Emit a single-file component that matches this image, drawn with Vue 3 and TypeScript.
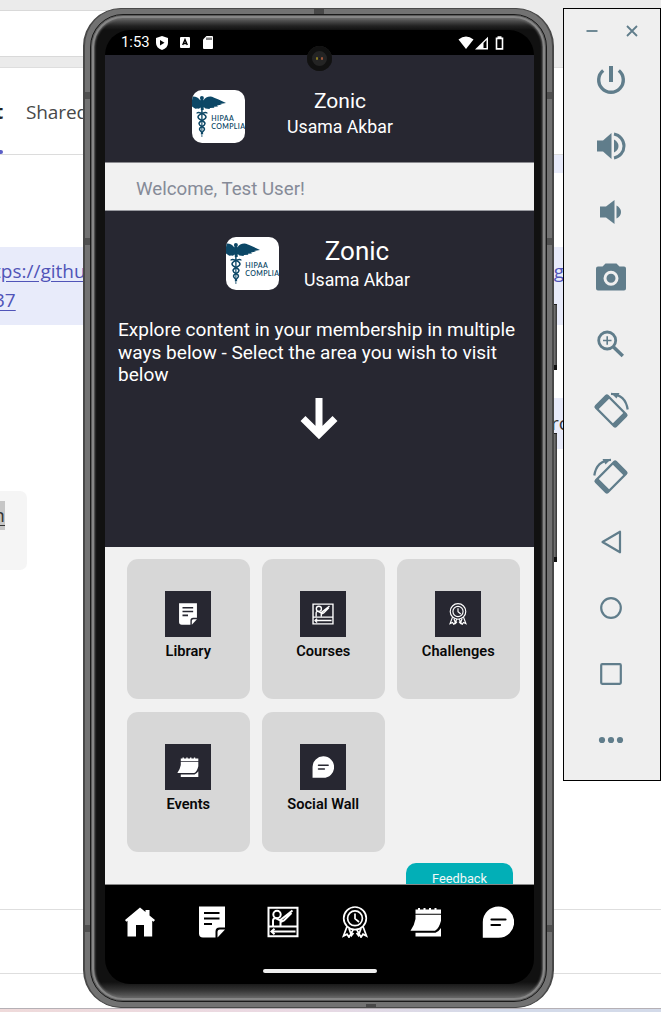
<script setup lang="ts">
type IconName = 'library' | 'courses' | 'challenges' | 'events' | 'social'

const tiles: { label: string; icon: IconName }[] = [
  { label: 'Library', icon: 'library' },
  { label: 'Courses', icon: 'courses' },
  { label: 'Challenges', icon: 'challenges' },
  { label: 'Events', icon: 'events' },
  { label: 'Social Wall', icon: 'social' },
]

const navItems: string[] = ['home', 'library', 'courses', 'challenges', 'events', 'social']

const tools: string[] = [
  'power', 'volume-up', 'volume-down', 'camera', 'zoom',
  'rotate-left', 'rotate-right', 'back', 'home', 'overview', 'more',
]
</script>

<template>
  <div class="desktop">
    <!-- Shared symbols -->
    <svg class="defs" width="0" height="0" aria-hidden="true">
      <symbol id="i-home" viewBox="0 0 32 32">
        <path fill="#fff" d="M16 1.500 21.500 6V4h4v5.500L31 14l-1.400 1.700-1.400-1V30.500H20V19h-8v11.500H3.500V14.700l-1.200 1L1 14z" />
      </symbol>
      <symbol id="i-library" viewBox="0 0 32 32">
        <path fill="#fff" d="M3 .5h26v21h-5.500q-4 0-4 4V31.500H7q-4 0-4-4z" />
        <path fill="#fff" d="M29 23.500 21.500 31.500V26q0-2.500 2.500-2.500z" />
        <path stroke="var(--hole)" stroke-width="2.200" d="M8 7h15.500M8 12.500h15.500M8 18h8" />
      </symbol>
      <symbol id="i-courses" viewBox="0 0 32 32">
        <g fill="none" stroke="#fff" stroke-width="2">
          <path d="M1.500 1.700h29v28.600h-29zM1.500 20.500h29" />
          <circle cx="10" cy="8.500" r="3.700" />
          <path d="M6 20V14.500q0-2.500 3-2.200l4 2L25.500 4.500M24.500 7 17 14.500 13.500 16v4M28.500 25.500H4.500" />
          <path d="M7.500 22.800 4.500 25.500l3 2.700" />
        </g>
      </symbol>
      <symbol id="i-challenges" viewBox="0 0 32 32">
        <g fill="none" stroke="#fff" stroke-width="1.700">
          <circle cx="16" cy="12.300" r="11.300" />
          <circle cx="16" cy="12.300" r="7.400" />
          <path d="M16 7.500v5.200l4 3.300M8 20.500 4.500 30l3.500-1.800 2 3 4.500-8M24 20.500 27.500 30 24 28.200l-2 3-4.500-8M10 22.500l2.500 7 2-2.500M22 22.500l-2.500 7-2-2.500" />
        </g>
      </symbol>
      <symbol id="i-events" viewBox="0 0 32 32">
        <path fill="#fff" d="M5.500 3.500H8V2h2v1.500h3.500V2h2v1.500h3.500V2h2v1.500h3.500V2h2v1.500H31v4.300H5.500zM5.500 8.800H31v6q-2 8-6 10H.5Q4.500 19 5.500 13zM5.500 26.800h20q3-1 5.500-4.800v8.500H5.500z" />
      </symbol>
      <symbol id="i-social" viewBox="0 0 32 32">
        <path fill="#fff" d="M16.500 .5A15.500 15.500 0 1 1 16.500 31.800H.8V16A15.600 15.600 0 0 1 16.500 .5z" />
        <path stroke="var(--hole)" stroke-width="2.200" stroke-linecap="round" d="M9.500 13.500h14M9.500 19h8.500" />
      </symbol>
      <symbol id="i-hipaa" viewBox="0 0 53 53">
        <g fill="#0c4766">
          <path d="M0 6.500q5.500-.5 8.300 4v-1h3v1Q14 6 20 6.700q5 2 14 6.300l-6 1 2 .6-5 .9 1 .9-4 .4.300.9-4.300.2-.5 1.200-4-.5-1.800-1.500V20H8.800v-2.500l-2 1.300-1.500-.3-2 .3L0 16.500z" />
          <circle cx="9.900" cy="8" r="2" />
          <path d="M9 9h1.800l-.5 38h-.8z" />
        </g>
        <g fill="none" stroke="#0c4766" stroke-width="1.500">
          <path d="M5 23.500c0-3 9 1 9 3.500 0 3-7 3.500-7 6.500s5.500 3 5.500 5.500-3.500 3-3 5" />
          <path d="M15 23.500c0-3-9 1-9 3.500 0 3 7 3.500 7 6.500s-5.500 3-5.500 5.500 3.500 3 3 5" />
        </g>
        <text class="logo-text" x="19.300" y="30.800" textLength="22.500">HIPAA</text>
        <text class="logo-text" x="19.300" y="39" textLength="39.500">COMPLIAN</text>
      </symbol>
    </svg>

    <!-- Chat window behind the emulator -->
    <div class="chat">
      <div class="titlebar"><div class="search"></div></div>
      <div class="tabs">
        <span class="tab-cut">t</span><span class="tab">Shared</span>
        <i class="tab-marker"></i>
      </div>
      <div class="messages">
        <div class="strip strip-a"></div>
        <div class="message">
          <div class="link-row"><a>tps://githu</a><a class="tail">g</a></div>
          <a>37</a>
        </div>
        <div class="strip strip-b">rc</div>
        <div class="bubble"><span>n</span></div>
      </div>
      <div class="composer"></div>
      <div class="below"></div>
      <div class="taskbar"></div>
    </div>

    <!-- Phone -->
    <div class="key key-top"></div>
    <div class="key key-bottom"></div>
    <div class="phone">
      <i class="seam seam-top"></i><i class="seam seam-bottom"></i>
      <i class="band band-1"></i><i class="band band-2"></i><i class="band band-3"></i>
      <i class="band right band-1"></i><i class="band right band-2"></i><i class="band right band-3"></i>
      <div class="rim">
        <div class="screen">
          <div class="status">
            <span class="clock">1:53</span>
            <svg class="shield" width="12" height="14" viewBox="0 0 12 14"><path fill="#fff" d="M6 0 12 2v5q0 5-6 7-6-2-6-7V2z" /><path d="M4 4v5.500L8.500 6.700z" /></svg>
            <svg class="letter" width="10" height="11" viewBox="0 0 10 11"><rect width="10" height="11" rx="1" fill="#fff" /><path fill="none" stroke="#000" stroke-width="1.400" d="M2.700 8 5 2.500 7.300 8M3.500 6.500h3" /></svg>
            <svg class="sd" width="10" height="13" viewBox="0 0 10 13"><path fill="#fff" d="M3.500 0H9q1 0 1 1v11q0 1-1 1H1q-1 0-1-1V3.500z" /><path stroke="#000" d="M4 1.500v2.500M6 1.500v2.500M8 1.500v2.500" /></svg>
            <svg class="signals" width="47" height="14" viewBox="0 0 47 14">
              <path fill="#fff" d="M.5 3.500Q8-2.500 15.500 3.500L8 13z" />
              <path fill="#fff" d="M17 13.500 30 .8v12.700z" />
              <path fill="#000" d="M25.500 7 28.500 4v8h-3z" />
              <path fill="#fff" d="M39.500 .3h4V1.500h1.800v12.200h-7.600V1.500h1.800z" /><path fill="#000" d="M39.300 3.200h4.400v8.900h-4.400z" />
            </svg>
          </div>
          <header class="appbar">
            <svg class="logo" width="53" height="53"><use href="#i-hipaa" /></svg>
            <div class="brand"><b>Zonic</b><span>Usama Akbar</span></div>
          </header>
          <div class="welcome">Welcome, Test User!</div>
          <section class="hero">
            <div class="hero-brand">
              <svg class="logo" width="53" height="53"><use href="#i-hipaa" /></svg>
              <div class="brand big"><b>Zonic</b><span>Usama Akbar</span></div>
            </div>
            <p>Explore content in your membership in multiple<br />ways below - Select the area you wish to visit<br />below</p>
            <svg class="arrow" width="38" height="42" viewBox="0 0 38 42"><path fill="none" stroke="#fff" stroke-width="7" d="M19 0v36M3 20.500 19 36.300 35 20.500" /></svg>
          </section>
          <main class="content">
            <div class="grid">
              <div v-for="t in tiles" :key="t.label" class="tile">
                <div class="tile-icon"><svg width="22" height="22"><use :href="'#i-' + t.icon" /></svg></div>
                <span>{{ t.label }}</span>
              </div>
            </div>
            <button class="feedback">Feedback</button>
          </main>
          <nav class="nav">
            <div class="nav-row">
              <svg v-for="n in navItems" :key="n" width="32" height="32"><use :href="'#i-' + n" /></svg>
            </div>
            <i class="handle"></i>
          </nav>
        </div>
        <div class="lens"><i></i><i></i></div>
      </div>
    </div>

    <!-- Emulator toolbar -->
    <aside class="toolbar">
      <div class="window-buttons">
        <svg width="12" height="12" viewBox="0 0 12 12"><path d="M.5 6h11" /></svg>
        <svg width="12" height="12" viewBox="0 0 12 12"><path d="M1 1l10 10M11 1 1 11" /></svg>
      </div>
      <div v-for="(tool, i) in tools" :key="i" class="tool">
        <svg width="36" height="36" viewBox="-18 -18 36 36">
          <g v-if="tool === 'power'" class="line" stroke-width="3.400"><path d="M0-14V2" stroke-width="4" /><path d="M-7.800-9.500A12.300 12.300 0 1 0 7.800-9.500" /></g>
          <g v-else-if="tool === 'volume-up'"><path d="M-14-5.500h6L.5-13V13L-8 5.500h-6zM3-6.500Q7.500-4 7.500 0T3 6.500z" /><path class="line" stroke-width="3" d="M3-12A12.200 12.200 0 0 1 3 12" /></g>
          <path v-else-if="tool === 'volume-down'" d="M-11-5.500h6L3.500-12V12L-5 5.500h-6zM5.500-6.500Q10-4 10 0T5.500 6.500z" />
          <g v-else-if="tool === 'camera'" transform="translate(0 -1)"><path d="M-5.500-13.500h11l3 3H13q2 0 2 2v20q0 2-2 2h-26q-2 0-2-2v-20q0-2 2-2h4.500z" /><circle cy="1.300" r="6" fill="none" stroke="#efefef" stroke-width="3" /></g>
          <g v-else-if="tool === 'zoom'" class="line" stroke-width="2.800"><circle cx="-3.800" cy="-3.500" r="8.500" /><path d="M2.500 3l9.300 9" stroke-width="3.500" /><path d="M-8-3.500H.5M-3.800-7.700V.7" stroke-width="1.600" /></g>
          <g v-else-if="tool.startsWith('rotate')" :class="{ mirror: tool === 'rotate-right' }">
            <path transform="translate(0 1) rotate(45)" fill-rule="evenodd" d="M-13-9.500h26q2.300 0 2.300 2.300V7.200q0 2.300-2.300 2.300h-26q-2.300 0-2.300-2.300V-7.200q0-2.300 2.300-2.300zM-10-7.300V7.300h20V-7.300z" />
            <path class="line" stroke-width="2.200" d="M0-16.200Q14.500-15.500 16.700-.5" /><path d="M0-17h8.500L5.500-11.500z" />
          </g>
          <path v-else-if="tool === 'back'" class="line" stroke-width="2.200" stroke-linejoin="round" d="M9-10.300V10.300L-8.500 0z" />
          <circle v-else-if="tool === 'home'" class="line" stroke-width="2.200" r="9.800" />
          <rect v-else-if="tool === 'overview'" class="line" stroke-width="2.200" x="-9.800" y="-9.800" width="19.600" height="19.600" rx="1" />
          <g v-else><circle cx="-9" r="3.100" /><circle r="3.100" /><circle cx="9" r="3.100" /></g>
        </svg>
      </div>
    </aside>
  </div>
</template>

<style>
html, body { margin: 0; overflow: hidden; }
</style>

<style scoped>
* { box-sizing: border-box; }
svg { display: block; }
.desktop { position: relative; width: 661px; height: 1012px; overflow: hidden; background: #fff; }
.defs { position: absolute; }
.logo-text { font: 600 7px Lato, sans-serif; fill: #0c4766; }

.chat { display: flex; flex-direction: column; height: 1012px; font-family: "Open Sans", "Noto Sans", sans-serif; }
.titlebar { height: 68px; background: #ebebeb; padding-top: 10px; border-bottom: 1px solid #dedede; }
.search { width: 400px; height: 47px; background: #fff; border: 1px solid #d9d9d9; border-left: 0; }
.tabs { position: relative; height: 87px; border-bottom: 1px solid #dcdcdc; display: flex; padding-top: 30px; font-size: 19px; line-height: 28px; color: #484848; white-space: nowrap; }
.tab-cut { width: 26px; margin-left: -5px; padding-right: 4px; font-weight: 700; color: #222; }
.tab { margin-left: 5px; letter-spacing: -.1px; }
.tab-marker { position: absolute; left: -4px; bottom: 0; width: 7px; height: 4px; border-radius: 2px; background: #5b5fc7; }
.messages { height: 754px; }
.strip { margin-left: 540px; background: #e8ebfa; }
.strip-a { height: 18px; }
.message { margin-top: 74px; height: 78px; background: #e8ebfa; padding-top: 10px; font-size: 19px; line-height: 29px; color: #5054b8; }
.message a { display: block; text-decoration: underline; text-underline-offset: 3px; margin-left: -6px; white-space: nowrap; }
.link-row { display: flex; justify-content: space-between; padding-right: 97px; }
.strip-b { margin-top: 73px; height: 51px; padding-left: 11px; line-height: 50px; font-size: 19px; color: #333; }
.bubble { margin-top: 42px; width: 27px; height: 79px; border-radius: 0 7px 7px 0; background: #f5f5f5; padding-top: 10px; font-size: 19px; line-height: 29px; color: #333; }
.bubble span { display: block; width: 5px; height: 29px; background: #c6c6c6; text-decoration: underline; text-underline-offset: 3px; direction: rtl; overflow: hidden; }
.composer { height: 65px; border: 1px solid #dedede; border-width: 1px 0; }
.below { flex: 1; }
.taskbar { height: 4px; border-top: 1px solid #b5b0b5; background: linear-gradient(90deg, #efdada, #ead9e3 45%, #d3dae9 75%); }

.key { position: absolute; left: 550px; width: 7px; background: linear-gradient(90deg, #222 40%, #777 60%, #333); border-bottom: 5px solid #111; border-top: 1px solid #222; }
.key-top { top: 304px; height: 66px; }
.key-bottom { top: 433px; height: 129px; }

.phone { position: absolute; left: 83px; top: 8px; width: 471px; height: 1000px; border-radius: 38px; border: 1px solid #484848; border-width: 1px 2px; background: #727272; padding: 5px; }
.seam { position: absolute; width: 10px; height: 5px; background: #484848; }
.seam-top { left: 229px; top: 0; }
.seam-bottom { left: 281px; bottom: 0; height: 3px; }
.band { position: absolute; left: 0; width: 5px; height: 7px; background: #505050; }
.band.right { left: auto; right: 0; }
.band-1 { top: 83px; }
.band-2 { top: 229px; }
.band-3 { top: 916px; }
.rim { position: relative; height: 988px; border-radius: 33px; border: 1px solid #1a1a1a; background: linear-gradient(180deg, #8a8a8a 0, #555 5px, #222 11px, #111 15px, #111 calc(100% - 19px), #333 calc(100% - 11px), #777 100%); padding: 15px 14px 17px; box-shadow: inset 0 0 0 1px #5a5a5a, inset 0 0 0 3px #868686, inset 0 0 2px 4px #666; }
.screen { position: relative; height: 954px; width: 429px; border-radius: 25px; overflow: hidden; background: #000; display: flex; flex-direction: column; font-family: Roboto, sans-serif; color: #fff; --hole: #272731; }

.status { height: 25px; display: flex; align-items: center; padding-left: 16px; }
.clock { width: 28px; font-size: 14.800px; line-height: 16px; margin-top: -1px; }
.shield { margin-left: 7px; }
.letter { margin-left: 12px; }
.sd { margin-left: 13px; }
.signals { margin-left: auto; margin-right: 29px; }

.appbar { height: 108px; background: #272731; border-bottom: 1px solid #8b8b90; display: flex; align-items: flex-start; padding: 36px 0 0 87px; }
.appbar .logo { margin-top: -1px; }
.logo { background: #fff; border-radius: 10px; flex: none; }
.brand { display: flex; flex-direction: column; align-items: center; width: 120px; margin-left: 35px; margin-top: -3px; white-space: nowrap; }
.brand b { font-weight: 400; font-size: 21px; line-height: 26px; }
.brand span { font-size: 17.700px; line-height: 26px; }
.brand.big b { font-size: 26px; line-height: 30px; }
.brand.big span { line-height: 28px; }
.welcome { height: 48px; border-bottom: 1px solid #999aa0; background: #f1f1f1; color: #868b98; font-size: 18.700px; line-height: 52px; padding-left: 31px; }
.hero { height: 336px; background: #272731; padding-top: 26px; }
.hero-brand { display: flex; height: 53px; padding-left: 121px; }
.hero-brand .brand { margin-left: 18px; margin-top: -1px; }
.hero p { margin: 29px 0 0 13px; font-size: 19.060px; line-height: 22.700px; white-space: nowrap; }
.arrow { margin: 11px 0 0 195px; }
.content { position: relative; height: 338px; background: #f1f1f1; padding: 12px 14px 0 22px; overflow: hidden; border-bottom: 1px solid #888; }
.grid { display: grid; grid-template-columns: repeat(3, 122.500px); grid-auto-rows: 140.200px; gap: 12.500px; }
.tile { border-radius: 11px; background: #d7d7d7; display: flex; flex-direction: column; align-items: center; padding-top: 32px; }
.tile-icon { width: 46px; height: 46px; background: #272731; display: grid; place-items: center; }
.tile span { font-size: 14.600px; line-height: 18px; margin-top: 5px; font-weight: 600; color: #080808; }
.feedback { display: block; margin: 11px 7px 0 auto; width: 107px; height: 35px; border: 0; border-radius: 10px; background: #02afb7; color: #f1f8f8; font: 12.800px/15px Roboto, sans-serif; padding: 0 0 4px; }
.nav { height: 99px; display: flex; flex-direction: column; align-items: center; --hole: #000; }
.nav-row { width: 429px; display: flex; justify-content: space-between; padding: 21px 20px 0 19px; }
.handle { width: 114px; height: 4px; border-radius: 2px; background: #eee; margin-top: 31px; }
.lens { position: absolute; left: 216px; top: 31px; width: 25px; height: 25px; border-radius: 50%; background: #111; box-shadow: inset 0 0 0 5px #111, inset 0 0 0 12px #242424; display: flex; align-items: center; justify-content: center; gap: 3px; }
.lens i { width: 2px; height: 3px; border-radius: 1px; background: #8a7b22; }
.lens i + i { background: #a05538; }

.toolbar { position: absolute; left: 563px; top: 8px; width: 98px; height: 773px; background: #efefef; border: 1px solid #000; }
.window-buttons { height: 38px; display: flex; gap: 28px; padding: 16px 0 0 22px; fill: none; stroke: #607d8b; stroke-width: 1.800; }
.tool { height: 66px; display: flex; align-items: center; justify-content: center; padding-right: 2px; fill: #607d8b; }
.tool svg { overflow: visible; }
.line { fill: none; stroke: #607d8b; }
.mirror { transform: scaleX(-1); }
</style>
